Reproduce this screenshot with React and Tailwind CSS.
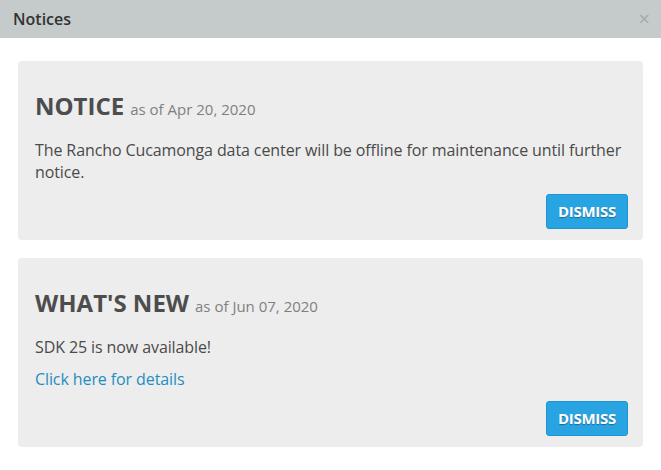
export default function App() {
  const font = { fontFamily: '"Open Sans", sans-serif' };
  return (
    <div className="w-[661px] h-[470px] bg-white overflow-hidden" style={font}>
      <div className="h-[38px] bg-[#c5cbcb] flex items-center justify-between pl-[13px] pr-[11px]">
        <span className="text-[16px] font-semibold text-[#333]">Notices</span>
        <span className="text-[20px] text-[#a4a9aa] leading-none">×</span>
      </div>
      <div className="px-[18px] pt-[23px] flex flex-col gap-[18px]">
        <div className="bg-[#ededed] rounded-[4px] pl-[17px] pr-[8px] pt-[29px] pb-[11px]">
          <div className="flex items-baseline gap-[6px] text-[#4d4d4d]">
            <span className="text-[24px] font-bold leading-[32px]">NOTICE</span>
            <span className="text-[15px] text-[#808080]">as of Apr 20, 2020</span>
          </div>
          <p className="mt-[17px] text-[16px] leading-[22px] tracking-[-0.1px] text-[#4a4a4a]">
            The Rancho Cucamonga data center will be offline for maintenance until further notice.
          </p>
          <div className="flex justify-end mt-[11px] pr-[7px]">
            <button className="w-[82px] h-[35px] rounded-[3px] bg-[#29a4e2] border border-[#1f95d0] text-white text-[15px] font-bold tracking-[-0.3px] [text-shadow:0_1px_1px_rgba(0,0,0,0.35)]">
              DISMISS
            </button>
          </div>
        </div>
        <div className="bg-[#ededed] rounded-[4px] pl-[17px] pr-[8px] pt-[29px] pb-[11px]">
          <div className="flex items-baseline gap-[6px] text-[#4d4d4d]">
            <span className="text-[24px] font-bold leading-[32px]">WHAT'S NEW</span>
            <span className="text-[15px] text-[#808080]">as of Jun 07, 2020</span>
          </div>
          <p className="mt-[17px] text-[16px] leading-[22px] tracking-[-0.1px] text-[#4a4a4a]">SDK 25 is now available!</p>
          <p className="mt-[10px] text-[16px] leading-[22px] tracking-[-0.1px] text-[#1f8dc0]">Click here for details</p>
          <div className="flex justify-end mt-[11px] pr-[7px]">
            <button className="w-[82px] h-[35px] rounded-[3px] bg-[#29a4e2] border border-[#1f95d0] text-white text-[15px] font-bold tracking-[-0.3px] [text-shadow:0_1px_1px_rgba(0,0,0,0.35)]">
              DISMISS
            </button>
          </div>
        </div>
      </div>
    </div>
  );
}
